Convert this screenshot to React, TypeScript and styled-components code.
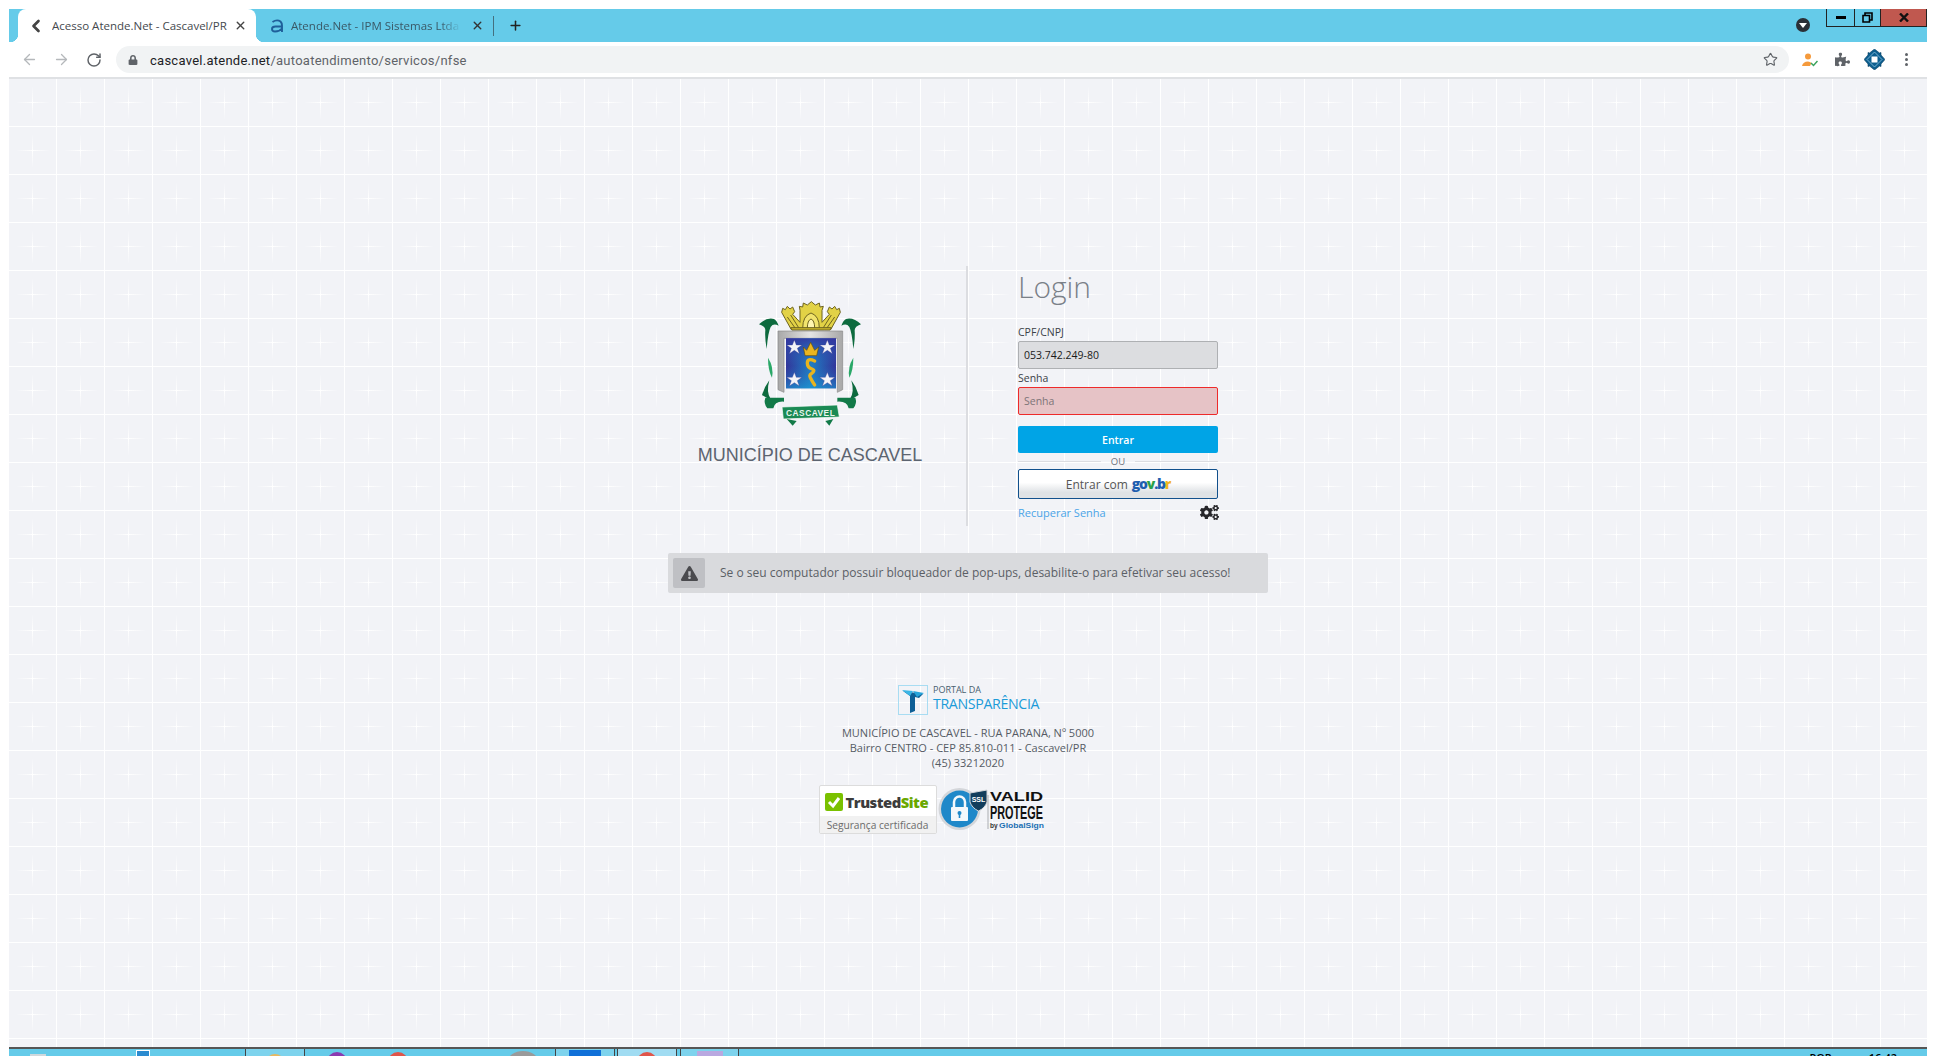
import React from "react";
import styled, { createGlobalStyle } from "styled-components";
import { ArrowLeft, ArrowRight, RotateCw, Star, Plus, X, ChevronLeft } from "lucide-react";
import { FaCogs, FaExclamationTriangle, FaLock, FaPuzzlePiece } from "react-icons/fa";

const tile = `<svg xmlns='http://www.w3.org/2000/svg' width='48' height='48'><defs><linearGradient id='h'><stop offset='0' stop-color='#fff' stop-opacity='0'/><stop offset='.5' stop-color='#fff'/><stop offset='1' stop-color='#fff' stop-opacity='0'/></linearGradient><linearGradient id='v' x2='0' y2='1'><stop offset='0' stop-color='#fff' stop-opacity='0'/><stop offset='.5' stop-color='#fff'/><stop offset='1' stop-color='#fff' stop-opacity='0'/></linearGradient></defs><rect x='47' width='1' height='48' fill='#fff'/><rect y='47' width='48' height='1' fill='#fff'/><rect x='7' y='23' width='34' height='1' fill='url(#h)'/><rect x='23' y='7' width='1' height='34' fill='url(#v)'/></svg>`;

const GlobalStyle = createGlobalStyle`
  html, body { margin: 0; padding: 0; background: #fff; }
  body { font-family: "Open Sans", "Liberation Sans", sans-serif; }
  * { box-sizing: border-box; }
`;

const Frame = styled.div`
  width: 1936px; height: 1056px; padding: 9px 9px 0; display: flex; flex-direction: column; overflow: hidden; background: #fff;
`;
const TabStrip = styled.div`
  height: 33px; background: #65cbe9; display: flex; align-items: stretch; padding-left: 9px; flex: none;
`;
const ActiveTab = styled.div`
  width: 238px; background: #fff; border-radius: 8px 8px 0 0; display: flex; align-items: center; position: relative; padding-left: 8px;
  &::before, &::after { content: ""; position: absolute; bottom: 0; width: 8px; height: 8px; }
  &::before { left: -8px; background: radial-gradient(circle at 0 0, transparent 8px, #fff 8.5px); }
  &::after { right: -8px; background: radial-gradient(circle at 100% 0, transparent 8px, #fff 8.5px); }
`;
const TabTitle = styled.span<{ $w: number; $c: string; $ml: number; $fade?: boolean }>`
  font: 11.5px "Open Sans", sans-serif; color: ${p => p.$c}; width: ${p => p.$w}px; margin-left: ${p => p.$ml}px; white-space: nowrap; overflow: hidden; flex: none; margin-top: -1px;
  ${p => (p.$fade ? "mask-image: linear-gradient(90deg, #000 88%, transparent);" : "")}
`;
const Tab = styled.div`
  width: 284px; display: flex; align-items: center; padding-left: 14px; flex: none;
`;
const FaviconSvg = styled.svg`
  width: 14px; height: 14px; flex: none;
`;
const TabSep = styled.span`
  width: 1px; height: 20px; background: #44707f; flex: none; margin-left: 9px;
`;
const PlusSlot = styled.span`
  display: flex; margin-left: 14px; color: #222;
`;
const StripFill = styled.div`
  flex: 1; display: flex; justify-content: flex-end; align-items: flex-start;
`;
const MenuDot = styled.span`
  width: 14px; height: 14px; border-radius: 50%; background: #2a2f36; margin: 9px 16px 0 0; display: flex; align-items: center; justify-content: center;
  &::after { content: ""; border: 4px solid transparent; border-top: 5px solid #fff; border-bottom: 0; }
`;
const WinControls = styled.div`
  display: flex; height: 18px; border: 1px solid #222; border-top: 0;
`;
const WinBtn = styled.div<{ $w: number; $red?: boolean }>`
  width: ${p => p.$w}px; display: flex; align-items: center; justify-content: center; background: ${p => (p.$red ? "#c0584f" : "transparent")};
  & + & { border-left: 1px solid #222; }
`;
const MinBar = styled.span`
  width: 10px; height: 3px; background: #000;
`;
const RestoreIcon = styled.svg`
  width: 11px; height: 11px; display: block;
`;
const CloseIcon = styled.svg`
  width: 10px; height: 9px; display: block;
`;

const Toolbar = styled.div`
  height: 37px; flex: none; display: flex; align-items: center; background: #fff; border-bottom: 2px solid #dfe1e4; padding: 0 0 0 12px;
`;
const NavBtn = styled.span<{ $c: string; $ml?: number }>`
  display: flex; color: ${p => p.$c}; margin-left: ${p => p.$ml ?? 0}px; flex: none;
`;
const Omnibox = styled.div`
  width: 1673px; height: 27px; margin-left: 14px; background: #f1f3f4; border-radius: 14px; display: flex; align-items: center; padding: 0 11px 0 12px; flex: none;
`;
const LockSlot = styled.span`
  display: flex; color: #5f6368; flex: none; margin-right: 12px; font-size: 10px;
`;
const Url = styled.span`
  font: 13px Roboto, sans-serif; letter-spacing: .26px; color: #5f6368; flex: 1; white-space: nowrap; padding-top: 1px;
  b { font-weight: 400; color: #202124; }
`;
const StarSlot = styled.span`
  display: flex; color: #5f6368;
`;
const ToolIcons = styled.div`
  display: flex; align-items: center; flex: none; padding-left: 4px;
`;
const ToolSlot = styled.span<{ $w: number }>`
  width: ${p => p.$w}px; display: flex; align-items: center; justify-content: center; color: #5f6368;
`;
const Dots = styled.span`
  display: flex; flex-direction: column; gap: 2px;
  i { width: 3px; height: 3px; border-radius: 50%; background: #5f6368; display: block; }
`;

const Page = styled.main`
  flex: 1; min-height: 0; background-color: #f2f3f7;
  background-image: url("data:image/svg+xml,${encodeURIComponent(tile)}"); background-size: 48px 48px; background-position: 0 0;
  display: flex; flex-direction: column; align-items: center; padding-top: 187px;
`;
const LoginRow = styled.section`
  width: 600px; height: 260px; display: flex; flex: none;
`;
const Brand = styled.div`
  width: 300px; border-right: 2px solid #dcdde1; display: flex; flex-direction: column; align-items: center; padding: 29px 14px 0 0; flex: none;
`;
const CrestSvg = styled.svg`
  width: 120px; height: 140px; display: block; margin-bottom: 9px;
`;
const BrandName = styled.h2`
  margin: 0; font: 400 18px/22px "Liberation Sans", Arial, sans-serif; color: #5c6470; white-space: nowrap;
`;
const FormCol = styled.form`
  width: 200px; margin-left: 50px; display: flex; flex-direction: column;
`;
const Title = styled.h1`
  margin: 0; font: 300 30px/38px "Open Sans", sans-serif; color: #7a8088; height: 57px; padding-top: 2px;
`;
const Label = styled.label`
  font: 400 10.5px/18px "Open Sans", sans-serif; color: #3a3f47; height: 18px;
`;
const Field = styled.input<{ $error?: boolean }>`
  width: 200px; height: 28px; padding: 0 5px; border-radius: 2px; outline: none; margin-bottom: ${p => (p.$error ? 11 : 0)}px;
  font: 400 10.5px "Open Sans", sans-serif; color: #1a1a1a;
  border: 1px solid ${p => (p.$error ? "#ee2a2a" : "#aeb0b3")}; background: ${p => (p.$error ? "#e6c3c6" : "#dcdde0")};
  &::placeholder { color: #7d7478; opacity: 1; }
`;
const PrimaryBtn = styled.button`
  width: 200px; height: 27px; border: 0; border-radius: 2px; background: #00a4e6; color: #fff; font: 600 10.5px "Open Sans", sans-serif; padding: 0; flex: none;
`;
const OrRow = styled.div`
  height: 16px; display: flex; align-items: center; gap: 10px; font: 400 9.5px "Open Sans", sans-serif; color: #6a7079; flex: none;
  &::before, &::after { content: ""; flex: 1; height: 1px; background: #dcdde1; }
`;
const GovBtn = styled.button`
  width: 200px; height: 30px; border: 1px solid #11508c; border-radius: 2px; padding: 0; display: flex; align-items: center; justify-content: center; gap: 4px; flex: none;
  background: linear-gradient(#fff 0 45%, #dfe2e5 80%, #dfe2e5); font: 400 12px "Open Sans", sans-serif; color: #555;
`;
const GovMark = styled.span`
  font: 800 14px/1 "Open Sans", sans-serif; letter-spacing: -1.2px;
`;
const Tint = styled.span<{ $c: string }>`
  color: ${p => p.$c};
`;
const FormFoot = styled.div`
  display: flex; align-items: center; justify-content: space-between; margin-top: 4px; height: 18px;
`;
const Recover = styled.a`
  font: 400 11px "Open Sans", sans-serif; color: #4aa5e8;
`;
const GearSlot = styled.span`
  display: flex; color: #26262a; margin-right: -1px;
`;

const Alert = styled.div`
  width: 600px; height: 40px; margin-top: 27px; border-radius: 2px; background: #d9dadd; display: flex; align-items: center; padding: 0 5px; gap: 15px; flex: none;
`;
const AlertIcon = styled.span`
  width: 32px; height: 30px; background: #bfc0c4; border-radius: 2px; display: flex; align-items: center; justify-content: center; color: #4a4a4e; flex: none;
`;
const AlertText = styled.span`
  font: 400 12px "Open Sans", sans-serif; color: #5b5f66; white-space: nowrap; margin-top: -1px;
`;

const Footer = styled.footer`
  display: flex; flex-direction: column; align-items: center; margin-top: 90px;
`;
const PortalSvg = styled.svg`
  width: 146px; height: 32px; display: block; margin-left: 3px;
`;
const Address = styled.p`
  margin: 10px 0 15px; font: 400 11px/15px "Open Sans", sans-serif; color: #555b64; text-align: center;
`;
const Seals = styled.div`
  display: flex; align-items: center; gap: 1px; margin-right: 72px;
`;
const TrustCard = styled.div`
  width: 118px; height: 49px; border: 1px solid #dcdcdc; border-radius: 2px; background: #fff; display: flex; flex-direction: column; overflow: hidden; flex: none;
`;
const TrustTop = styled.div`
  height: 30px; display: flex; align-items: center; gap: 3px; padding: 2px 0 0 5px; font: 800 14.8px "Open Sans", sans-serif; letter-spacing: -.5px; color: #3c3c3c; white-space: nowrap; flex: none;
`;
const TrustCheck = styled.svg`
  width: 18px; height: 18px; flex: none;
`;
const TrustBottom = styled.div`
  flex: 1; background: #f1f1f1; font: 400 10.2px/18px "Open Sans", sans-serif; color: #6b6b6b; text-align: center; white-space: nowrap;
`;
const ValidSvg = styled.svg`
  width: 108px; height: 46px; display: block; flex: none;
`;

const Taskbar = styled.footer`
  height: 9px; flex: none; background: #65cbe9; border-top: 2px solid #555; display: flex; overflow: hidden;
`;
const TaskSlot = styled.div<{ $w: number; $on?: boolean; $hi?: boolean; $gap?: number }>`
  width: ${p => p.$w}px; flex: none; margin-left: ${p => p.$gap ?? 0}px; display: flex; justify-content: center; height: 9px;
  background: ${p => (p.$hi ? "#a0dcf2" : p.$on ? "#7dd3ed" : "transparent")};
  border-left: ${p => (p.$on || p.$hi ? "1px solid #444" : "0")}; border-right: ${p => (p.$on || p.$hi ? "1px solid #444" : "0")};
`;
const TaskDot = styled.span<{ $c: string; $w?: number; $t?: number }>`
  width: ${p => p.$w ?? 20}px; height: 20px; border-radius: 50%; background: ${p => p.$c}; margin-top: ${p => p.$t ?? 3}px; flex: none;
`;
const TaskSquare = styled.span<{ $c: string; $w: number; $t?: number; $edge?: boolean }>`
  width: ${p => p.$w}px; height: 20px; background: ${p => p.$c}; margin-top: ${p => p.$t ?? 3}px; flex: none; ${p => (p.$edge ? "border: 1px solid #fff;" : "")}
`;
const TrayText = styled.div`
  margin-left: auto; display: flex; gap: 37px; padding-right: 30px; font: 600 11px/12px "Open Sans", sans-serif; color: #000; padding-top: 3px;
`;

function Crest() {
  return (
    <CrestSvg viewBox="0 0 360 420" aria-label="Brasão">
      <defs>
        <linearGradient id="blue" x1="0" x2="1"><stop offset="0" stopColor="#33349a" /><stop offset=".5" stopColor="#1f7fc4" /><stop offset="1" stopColor="#33349a" /></linearGradient>
        <linearGradient id="blueV" x1="0" y1="0" x2="0" y2="1"><stop offset="0" stopColor="#3335a0" stopOpacity=".85" /><stop offset=".55" stopColor="#2a6ab8" stopOpacity="0" /><stop offset="1" stopColor="#18a0d8" stopOpacity=".6" /></linearGradient>
        <linearGradient id="silver" x1="0" x2="1"><stop offset="0" stopColor="#a8a8a8" /><stop offset=".5" stopColor="#e4e4e4" /><stop offset="1" stopColor="#a8a8a8" /></linearGradient>
      </defs>
      {/* crown */}
      <g fill="#e2d246" stroke="#6e6420" strokeWidth="3">
        <path d="M124 104 L95 52 L98 40 L106 44 L112 34 L120 42 L128 36 L134 50 L128 58 L150 82 L150 46 L148 34 L158 36 L160 24 L172 30 L184 20 L196 30 L208 24 L210 36 L220 34 L216 46 L216 82 L238 58 L232 50 L238 36 L246 42 L254 34 L260 44 L268 40 L271 52 L242 104 Z" />
        <path d="M158 100 Q158 62 183 54 Q208 62 208 100 Z" fill="#f1e36c" />
        <path d="M172 100 Q172 76 183 72 Q194 76 194 100 Z" fill="#fff6b0" />
        <path d="M112 66 L136 100 M122 60 L146 98 M254 66 L230 100 M244 60 L220 98" fill="none" strokeWidth="3" />
        <path d="M122 98 H244 L240 105 H126 Z" fill="#c9b52a" />
      </g>
      {/* mantling */}
      <path d="M27 88 Q50 66 72 72 Q80 76 86 92 Q70 84 62 96 Q54 112 50 162 Q44 130 46 106 Q46 94 27 88Z" fill="#0d6a3e" />
      <path d="M333 88 Q310 66 288 72 Q280 76 274 92 Q290 84 298 96 Q306 112 310 162 Q316 130 314 106 Q314 94 333 88Z" fill="#0d6a3e" />
      <path d="M54 188 Q72 216 66 248 Q54 226 54 188Z" fill="#2aa868" />
      <path d="M310 188 Q292 216 298 248 Q310 226 310 188Z" fill="#2aa868" />
      <path d="M58 256 Q44 274 36 300 Q50 310 62 312 Q48 292 58 256Z" fill="#0d6a3e" />
      <path d="M304 256 Q318 274 326 300 Q312 310 300 312 Q314 292 304 256Z" fill="#0d6a3e" />
      {/* shield */}
      <path d="M84 108 H278 V284 L262 292 V130 H102 V292 L84 284 Z" fill="url(#silver)" stroke="#8a8a8a" strokeWidth="2" />
      <rect x="108" y="130" width="150" height="150" fill="url(#blue)" />
      <rect x="108" y="130" width="150" height="150" fill="url(#blueV)" />
      <g fill="#f4f4f8" stroke="#34348e" strokeWidth="1">
        <polygon points="133,135 139,150 156,150 142,160 148,176 133,166 118,176 124,160 110,150 127,150" />
        <polygon points="232,135 238,150 255,150 241,160 247,176 232,166 217,176 223,160 209,150 226,150" />
        <polygon points="133,232 139,247 156,247 142,257 148,273 133,263 118,273 124,257 110,247 127,247" />
        <polygon points="232,232 238,247 255,247 241,257 247,273 232,263 217,273 223,257 209,247 226,247" />
      </g>
      <path d="M160 156 L170 166 L182 142 L194 166 L206 156 L200 182 H165 Z" fill="#eab520" stroke="#5c4a12" strokeWidth="2" />
      <path d="M194 198 Q172 188 172 204 Q172 218 186 222 Q198 226 184 236 Q176 240 182 250 Q188 262 194 270" fill="none" stroke="#e9b41e" strokeWidth="10" strokeLinecap="round" />
      {/* ribbon */}
      <path d="M46 308 H102 V320 Q74 318 70 340 H52 Q40 325 46 308Z" fill="#127a48" />
      <path d="M316 308 H262 V320 Q292 318 296 340 H310 Q322 325 316 308Z" fill="#127a48" />
      <path d="M96 336 L262 330 L268 366 L100 372 Z" fill="#1a8a54" stroke="#fff" strokeWidth="2" />
      <path d="M110 372 L128 392 L140 378Z M250 372 L238 392 L226 378Z" fill="#127a48" />
      <text x="182" y="362" textAnchor="middle" fontFamily="Liberation Sans, sans-serif" fontWeight="700" fontSize="25" letterSpacing="1.5" fill="#e8f5ee">CASCAVEL</text>
    </CrestSvg>
  );
}

function PortalLogo() {
  return (
    <PortalSvg viewBox="0 0 146 32" aria-label="Portal da Transparência">
      <rect x="1.5" y="2.5" width="29" height="29" fill="none" stroke="#a8dcf2" />
      <path d="M6 8 L26 11 L22 15 L18 14 L18 28 L13 30 L13 13 Z" fill="#0e5f96" />
      <path d="M5 7 L16 8 L13 13 Z" fill="#3bb6e6" />
      <path d="M16 8 L27 10 L20 14 Z" fill="#27a4da" />
      <text x="36" y="10" fontFamily="Open Sans, sans-serif" fontSize="9" fill="#48606f">PORTAL DA</text>
      <text x="36" y="26" fontFamily="Open Sans, sans-serif" fontSize="14.2" letterSpacing="-.35" fill="#1b9bd8">TRANSPARÊNCIA</text>
    </PortalSvg>
  );
}

function ValidSeal() {
  return (
    <ValidSvg viewBox="0 0 108 46" aria-label="Valid Protege">
      <circle cx="21.500" cy="22" r="21" fill="#d4d6da" />
      <circle cx="21.500" cy="22" r="18.500" fill="#1f88c9" />
      <rect x="13" y="20" width="17" height="14" rx="1" fill="#f4f8fb" />
      <path d="M16 20 V15 a5.500 5.500 0 0 1 11 0 V20" fill="none" stroke="#f4f8fb" strokeWidth="2.500" />
      <circle cx="21.500" cy="26" r="2" fill="#1f88c9" />
      <rect x="20.700" y="26" width="1.600" height="5" fill="#1f88c9" />
      <path d="M32 6 L49 3 V15 Q47 21 40.500 24 Q34 21 32 15Z" fill="#123d5c" stroke="#d4d6da" />
      <text x="40.500" y="15" textAnchor="middle" fontFamily="Liberation Sans, sans-serif" fontWeight="700" fontSize="7" fill="#fff">SSL</text>
      <rect x="49.500" y="8" width="1" height="34" fill="#a9adb2" />
      <text x="52" y="14" fontFamily="Liberation Sans, sans-serif" fontWeight="700" fontSize="12" textLength="53" lengthAdjust="spacingAndGlyphs" fill="#111">VALID</text>
      <text x="52" y="32" fontFamily="Liberation Sans, sans-serif" fontWeight="700" fontSize="19" textLength="53" lengthAdjust="spacingAndGlyphs" fill="#111">PROTEGE</text>
      <text x="52" y="41" fontFamily="Liberation Sans, sans-serif" fontWeight="700" fontSize="6.500" fill="#333">by</text>
      <text x="61" y="41" fontFamily="Liberation Sans, sans-serif" fontWeight="700" fontSize="8" textLength="45" lengthAdjust="spacingAndGlyphs" fill="#1a6fb4">GlobalSign</text>
    </ValidSvg>
  );
}

export default function App() {
  return (
    <>
      <GlobalStyle />
      <Frame>
        <TabStrip>
          <ActiveTab>
            <NavBtn $c="#444"><ChevronLeft size={20} strokeWidth={3.2} /></NavBtn>
            <TabTitle $w={175} $ml={6} $c="#45494e">Acesso Atende.Net - Cascavel/PR</TabTitle>
            <NavBtn $c="#444" $ml={7}><X size={13} strokeWidth={2.6} /></NavBtn>
          </ActiveTab>
          <Tab>
            <FaviconSvg viewBox="0 0 14 14"><path d="M2.500 3 Q7 0 10.500 2.500 Q12 4 12 6.500 V13 M12 7.500 H5.500 Q2 7.500 2 10 Q2 12.500 5 12.500 Q9.500 12.500 12 9.500" fill="none" stroke="#1f5f9a" strokeWidth="1.900" /></FaviconSvg>
            <TabTitle $w={170} $ml={7} $c="#3a5866" $fade>Atende.Net - IPM Sistemas Ltda -</TabTitle>
            <NavBtn $c="#333" $ml={10}><X size={13} strokeWidth={2.6} /></NavBtn>
            <TabSep />
            <PlusSlot><Plus size={15} strokeWidth={2.4} /></PlusSlot>
          </Tab>
          <StripFill>
            <MenuDot />
            <WinControls>
              <WinBtn $w={27}><MinBar /></WinBtn>
              <WinBtn $w={26}>
                <RestoreIcon viewBox="0 0 11 11"><path d="M3 3 V1 H10 V8 H8 M1 3.500 H7.500 V10 H1 Z" fill="none" stroke="#000" strokeWidth="1.600" /></RestoreIcon>
              </WinBtn>
              <WinBtn $w={46} $red>
                <CloseIcon viewBox="0 0 10 9"><path d="M1 .5 L9 8.500 M9 .5 L1 8.500" stroke="#111" strokeWidth="2.400" /></CloseIcon>
              </WinBtn>
            </WinControls>
          </StripFill>
        </TabStrip>
        <Toolbar>
          <NavBtn $c="#b5b8bb"><ArrowLeft size={17} strokeWidth={1.8} /></NavBtn>
          <NavBtn $c="#b5b8bb" $ml={15}><ArrowRight size={17} strokeWidth={1.8} /></NavBtn>
          <NavBtn $c="#5f6368" $ml={16}><RotateCw size={16} strokeWidth={2.2} /></NavBtn>
          <Omnibox>
            <LockSlot><FaLock /></LockSlot>
            <Url><b>cascavel.atende.net</b>/autoatendimento/servicos/nfse</Url>
            <StarSlot><Star size={15} strokeWidth={1.8} /></StarSlot>
          </Omnibox>
          <ToolIcons>
            <ToolSlot $w={33}>
              <svg width="16" height="14" viewBox="0 0 16 14"><circle cx="6" cy="3.500" r="3" fill="#f59a3c" /><path d="M0 13 Q1 8.500 6 8.500 Q8 8.500 9.500 10 L8 13Z" fill="#f59a3c" /><path d="M9 10 L11.500 12.500 L15.500 8" fill="none" stroke="#3aa35c" strokeWidth="1.500" /></svg>
            </ToolSlot>
            <ToolSlot $w={33}><FaPuzzlePiece size={15} /></ToolSlot>
            <ToolSlot $w={31}>
              <svg width="21" height="21" viewBox="0 0 21 21"><path d="M10.500 0 L15.500 4 L17 3.500 L17 6 L21 10.500 L17 15 L17 17.500 L15.500 17 L10.500 21 L5.500 17 L4 17.500 L4 15 L0 10.500 L4 6 L4 3.500 L5.500 4 Z" fill="#0d5f8f" stroke="#083e5f" strokeWidth=".6" /><path d="M3 10.500 L10.500 3 L18 10.500 L10.500 18 Z" fill="none" stroke="#7fb9d8" strokeWidth=".9" /><rect x="7.500" y="7.500" width="6" height="6" fill="#fff" /></svg>
            </ToolSlot>
            <ToolSlot $w={33}><Dots><i /><i /><i /></Dots></ToolSlot>
          </ToolIcons>
        </Toolbar>
        <Page>
          <LoginRow>
            <Brand>
              <Crest />
              <BrandName>MUNICÍPIO DE CASCAVEL</BrandName>
            </Brand>
            <FormCol>
              <Title>Login</Title>
              <Label>CPF/CNPJ</Label>
              <Field readOnly value="053.742.249-80" />
              <Label>Senha</Label>
              <Field $error placeholder="Senha" readOnly />
              <PrimaryBtn type="button">Entrar</PrimaryBtn>
              <OrRow>OU</OrRow>
              <GovBtn type="button">
                Entrar com
                <GovMark><Tint $c="#1f5fb0">go</Tint><Tint $c="#2ba14a">v</Tint><Tint $c="#1f5fb0">.b</Tint><Tint $c="#f2b51d">r</Tint></GovMark>
              </GovBtn>
              <FormFoot>
                <Recover>Recuperar Senha</Recover>
                <GearSlot><FaCogs size={19} /></GearSlot>
              </FormFoot>
            </FormCol>
          </LoginRow>
          <Alert>
            <AlertIcon><FaExclamationTriangle size={17} /></AlertIcon>
            <AlertText>Se o seu computador possuir bloqueador de pop-ups, desabilite-o para efetivar seu acesso!</AlertText>
          </Alert>
          <Footer>
            <PortalLogo />
            <Address>
              MUNICÍPIO DE CASCAVEL - RUA PARANA, Nº 5000<br />
              Bairro CENTRO - CEP 85.810-011 - Cascavel/PR<br />
              (45) 33212020
            </Address>
            <Seals>
              <TrustCard>
                <TrustTop>
                  <TrustCheck viewBox="0 0 18 18"><rect width="18" height="18" rx="2" fill="#7ac100" /><path d="M4 9 L8 13 L14 5" fill="none" stroke="#fff" strokeWidth="3" /></TrustCheck>
                  <span>Trusted<Tint $c="#6aa800">Site</Tint></span>
                </TrustTop>
                <TrustBottom>Segurança certificada</TrustBottom>
              </TrustCard>
              <ValidSeal />
            </Seals>
          </Footer>
        </Page>
        <Taskbar>
          <TaskSlot $w={16} $gap={21}><TaskSquare $c="#cfd8dc" $w={16} $t={5} /></TaskSlot>
          <TaskSlot $w={14} $gap={90}><TaskSquare $c="#2b8bd0" $w={14} $t={1} $edge /></TaskSlot>
          <TaskSlot $w={60} $gap={95} $on><TaskDot $c="#e8b860" $t={5} /></TaskSlot>
          <TaskSlot $w={20} $gap={22}><TaskDot $c="#8a3ab0" /></TaskSlot>
          <TaskSlot $w={20} $gap={41}><TaskDot $c="#e0554a" /></TaskSlot>
          <TaskSlot $w={32} $gap={99}><TaskDot $c="#9a9a9a" $w={30} $t={2} /></TaskSlot>
          <TaskSlot $w={60} $gap={16} $on><TaskSquare $c="#1070d8" $w={32} $t={1} /></TaskSlot>
          <TaskSlot $w={60} $gap={2} $hi><TaskDot $c="#e0554a" /></TaskSlot>
          <TaskSlot $w={59} $gap={3} $on><TaskSquare $c="#b9a8e0" $w={26} $t={2} /></TaskSlot>
          <TrayText><span>POR</span><span>16:42</span></TrayText>
        </Taskbar>
      </Frame>
    </>
  );
}
